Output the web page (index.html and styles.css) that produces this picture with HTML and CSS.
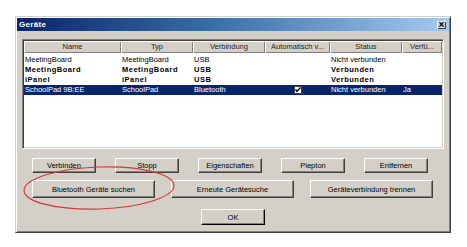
FILE: index.html
```html
<!DOCTYPE html>
<html lang="de">
<head>
    <meta charset="UTF-8">
    <title>Geräte</title>
    <link rel="stylesheet" href="styles.css">
</head>
<body>
<div class="window">
    <div class="titlebar">
        <span class="title">Geräte</span>
        <span class="close">×</span>
    </div>
    <div class="content">
        <div class="list">
            <div class="list-head">
                <div class="col">Name</div>
                <div class="col">Typ</div>
                <div class="col">Verbindung</div>
                <div class="col">Automatisch v...</div>
                <div class="col">Status</div>
                <div class="col">Verfü...</div>
            </div>
            <div class="row">
                <div class="cell">MeetingBoard</div>
                <div class="cell">MeetingBoard</div>
                <div class="cell">USB</div>
                <div class="cell"></div>
                <div class="cell">Nicht verbunden</div>
                <div class="cell"></div>
            </div>
            <div class="row bold">
                <div class="cell">MeetingBoard</div>
                <div class="cell">MeetingBoard</div>
                <div class="cell">USB</div>
                <div class="cell"></div>
                <div class="cell">Verbunden</div>
                <div class="cell"></div>
            </div>
            <div class="row bold">
                <div class="cell">iPanel</div>
                <div class="cell">iPanel</div>
                <div class="cell">USB</div>
                <div class="cell"></div>
                <div class="cell">Verbunden</div>
                <div class="cell"></div>
            </div>
            <div class="row selected">
                <div class="cell">SchoolPad 9B:EE</div>
                <div class="cell">SchoolPad</div>
                <div class="cell">Bluetooth</div>
                <div class="cell check-cell">
                    <svg class="check" width="8" height="8" viewBox="0 0 8 8">
                        <rect x="0.5" y="0.5" width="7" height="7" fill="#fff" stroke="#404040"/>
                        <path d="M1.5 3.5 L3 5.5 L6.5 1.5" fill="none" stroke="#000" stroke-width="1.4"/>
                    </svg>
                </div>
                <div class="cell">Nicht verbunden</div>
                <div class="cell">Ja</div>
            </div>
        </div>

        <div class="btn-row first">
            <button class="btn small">Verbinden</button>
            <button class="btn small">Stopp</button>
            <button class="btn small">Eigenschaften</button>
            <button class="btn small">Piepton</button>
            <button class="btn small">Entfernen</button>
        </div>
        <div class="btn-row second">
            <button class="btn wide">Bluetooth Geräte suchen</button>
            <button class="btn wide">Erneute Gerätesuche</button>
            <button class="btn wide">Geräteverbindung trennen</button>
        </div>
        <div class="btn-row third">
            <button class="btn ok">OK</button>
        </div>
    </div>

    <svg class="mark" width="160" height="50" viewBox="0 0 160 50">
        <ellipse cx="80" cy="24" rx="75" ry="21" fill="none" stroke="#d23a3a" stroke-width="1.2" transform="rotate(-2 80 24)"/>
    </svg>
</div>
</body>
</html>
```

FILE: styles.css
```css
html {
    height: 100%;
}
body {
    margin: 0;
    background: #fff;
    font-family: 'Liberation Sans', Arial, sans-serif;
    font-size: 7.5px;
    color: #000;
}
.window {
    position: relative;
    width: 436px;
    margin: 16px 0 0 15px;
    padding: 1px;
    box-sizing: border-box;
    background: #d4d0c8;
    border: 1px solid;
    border-color: #d4d0c8 #404040 #404040 #d4d0c8;
    box-shadow: inset 1px 1px #fff, inset -1px -1px #808080;
}
.titlebar {
    height: 13px;
    display: flex;
    align-items: center;
    justify-content: space-between;
    padding: 0 3px 0 2px;
    background: linear-gradient(90deg, #0a246a 0%, #3a6ea5 45%, #a6caf0 100%);
}
.title {
    color: #fff;
    font-weight: bold;
    font-size: 8px;
    letter-spacing: 0.3px;
}
.close {
    width: 9px;
    height: 8px;
    line-height: 8px;
    text-align: center;
    font-size: 10px;
    font-weight: bold;
    background: #d4d0c8;
    box-shadow: inset 1px 1px #fff, inset -1px -1px #404040;
}
.content {
    padding: 8px 5px 6px 5px;
}
.list {
    height: 110px;
    box-sizing: border-box;
    background: #fff;
    border: 1px solid;
    border-color: #808080 #fff #fff #808080;
    box-shadow: inset 1px 1px #404040, inset -1px -1px #d4d0c8;
    padding: 1px;
}
.list-head,
.row {
    display: grid;
    grid-template-columns: 97px 72px 72px 65px 72px 40px;
}
.list-head {
    height: 12px;
    margin-bottom: 2px;
    background: #d4d0c8;
}
.col {
    text-align: center;
    line-height: 12px;
    color: #222;
    white-space: nowrap;
    overflow: hidden;
    box-shadow: inset 1px 1px #fff, inset -1px -1px #808080;
}
.row {
    height: 10px;
    line-height: 10px;
}
.cell {
    padding-left: 1px;
    white-space: nowrap;
    overflow: hidden;
}
.row.bold {
    font-weight: bold;
    letter-spacing: 0.5px;
}
.row.selected {
    background: #0a246a;
    color: #fff;
}
.check-cell {
    display: flex;
    align-items: center;
    justify-content: center;
}
.btn-row {
    display: flex;
    padding-left: 10px;
}
.btn-row.first {
    margin-top: 9px;
    gap: 19px;
}
.btn-row.second {
    margin-top: 7px;
    gap: 16px;
}
.btn-row.third {
    margin-top: 11px;
    justify-content: center;
    padding-left: 0;
}
.btn {
    font-family: 'Liberation Sans', Arial, sans-serif;
    font-size: 7.5px;
    color: #000;
    background: #d4d0c8;
    border: 1px solid;
    border-color: #fff #404040 #404040 #fff;
    box-shadow: inset -1px -1px #808080;
    padding: 0;
    border-radius: 0;
}
.btn.small {
    width: 64px;
    height: 15px;
}
.btn.wide {
    width: 123px;
    height: 18px;
}
.btn.ok {
    width: 64px;
    height: 16px;
    border-color: #fff #000 #000 #fff;
}
.mark {
    position: absolute;
    left: 3px;
    top: 147px;
}
```
